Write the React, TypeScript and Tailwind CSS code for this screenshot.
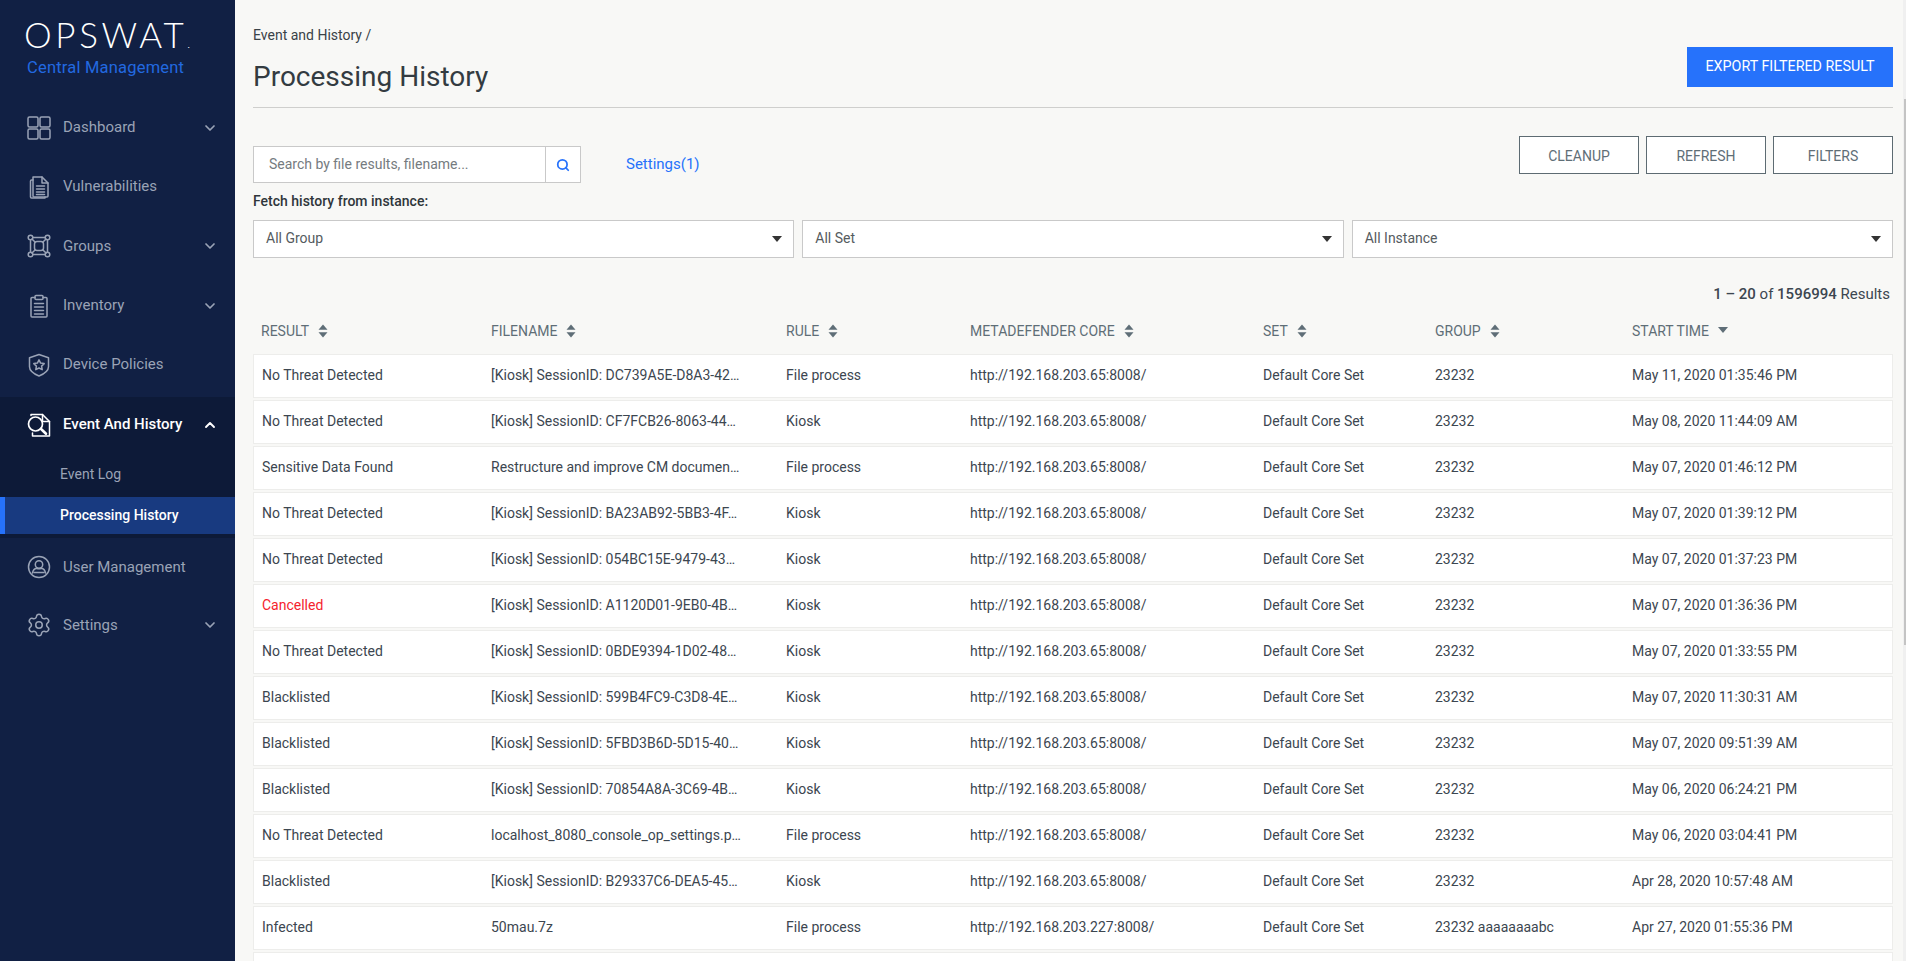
import React from "react";
import { ChevronDown, ChevronUp, Search, Settings } from "lucide-react";

const Ico = ({ children, white }: { children: React.ReactNode; white?: boolean }) => (
  <svg
    viewBox="0 0 24 24"
    fill="none"
    stroke="currentColor"
    strokeWidth={1.5}
    strokeLinecap="round"
    strokeLinejoin="round"
    className={"w-6 h-6 shrink-0 " + (white ? "text-white" : "text-[#9aa3b6]")}
  >
    {children}
  </svg>
);

const DashIcon = () => (
  <Ico>
    <rect x="1" y="1" width="10" height="10" rx="1.5" />
    <rect x="13" y="1" width="10" height="10" rx="1.5" />
    <rect x="1" y="13" width="10" height="10" rx="1.5" />
    <rect x="13" y="13" width="10" height="10" rx="1.5" />
  </Ico>
);
const VulnIcon = () => (
  <Ico>
    <path d="M6 2h9l6 6v13a1 1 0 0 1-1 1H7a1 1 0 0 1-1-1z" />
    <path d="M6 5H4.5a1 1 0 0 0-1 1v16a1 1 0 0 0 1 1H18v-1" />
    <path d="M15 2v6h6M9.5 11h8M9.5 14h8M9.5 17h8M9.5 19.5h8" />
  </Ico>
);
const GroupIcon = () => (
  <Ico>
    <circle cx="3.5" cy="3.5" r="2.3" />
    <circle cx="20.5" cy="3.5" r="2.3" />
    <circle cx="3.5" cy="20.5" r="2.3" />
    <circle cx="20.5" cy="20.5" r="2.3" />
    <rect x="7.5" y="7.5" width="9" height="9" rx="2.5" />
    <path d="M5.8 3.5h12.4M5.8 20.5h12.4M3.5 5.8v12.4M20.5 5.8v12.4M5 5l3 3M19 5l-3 3M5 19l3-3M19 19l-3-3" />
  </Ico>
);
const InvIcon = () => (
  <Ico>
    <path d="M8 3.5H5a1 1 0 0 0-1 1V22a1 1 0 0 0 1 1h14a1 1 0 0 0 1-1V4.5a1 1 0 0 0-1-1h-3" />
    <rect x="8" y="1.5" width="8" height="4" rx="1" />
    <path d="M7.5 9.5h9M7.5 13h9M7.5 16.5h9M7.5 20h9" />
  </Ico>
);
const ShieldIcon = () => (
  <Ico>
    <path d="M12 1.5l9.5 3.2v9c0 3.6-4 7-9.5 9.3-5.5-2.3-9.5-5.7-9.5-9.3v-9z" />
    <path d="M12 6.8l1.6 3.3 3.6.5-2.6 2.5.6 3.6-3.2-1.7-3.2 1.7.6-3.6-2.6-2.5 3.6-.5z" />
  </Ico>
);
const EventIcon = () => (
  <Ico white>
    <path d="M4 2.5V1.500h11.500l7 7V23H5.500v-3" strokeWidth={1.5} />
    <path d="M15.500 1.500v7h7" strokeWidth={1.5} />
    <circle cx="8.500" cy="11" r="7" strokeWidth={1.7} />
    <path d="M13.800 15.800l5.200 5" strokeWidth={2.6} />
  </Ico>
);
const UserIcon = () => (
  <Ico>
    <circle cx="12" cy="12" r="10.5" />
    <circle cx="12" cy="9.500" r="3.7" />
    <path d="M5.500 18c.5-2.800 2.500-4.500 4.200-4.700 1.500.7 3 .7 4.600 0 1.700.2 3.700 1.900 4.200 4.700" />
    <path d="M7 17.500h10" />
  </Ico>
);

const NavItem = ({
  label,
  icon,
  chevron,
  h = "h-[59px]",
}: {
  label: string;
  icon: React.ReactNode;
  chevron?: boolean;
  h?: string;
}) => (
  <div className={"flex items-center pl-[27px] pr-[17px] text-[#9aa3b6] " + h}>
    {icon}
    <span className="ml-[12px] text-[15px] flex-1">{label}</span>
    {chevron && <ChevronDown size={16} strokeWidth={2.6} />}
  </div>
);

const Sort = () => (
  <svg viewBox="0 0 10 14" className="w-[10px] h-[14px] ml-[9px] -mt-[1px] text-[#5f6e77]" fill="currentColor">
    <path d="M5 0.500L9.500 5.800H0.500z" />
    <path d="M5 13.500L9.500 8.200H0.500z" />
  </svg>
);

const Caret = () => (
  <svg viewBox="0 0 10 6" className="w-[10px] h-[6px] text-[#333]" fill="currentColor">
    <path d="M0 0h10L5 6z" />
  </svg>
);

const Select = ({ label }: { label: string }) => (
  <div className="flex-1 h-[38px] border border-[#c9c9c9] bg-white flex items-center justify-between pl-[12px] pr-[11px] pb-[1px] text-[14px] text-[#555b60]">
    <span>{label}</span>
    <Caret />
  </div>
);

const OutlineBtn = ({ label }: { label: string }) => (
  <button className="w-[120px] h-[38px] pt-[2px] border border-[#5d6b72] bg-white text-[14px] text-[#5f6e77]">
    {label}
  </button>
);

const COLS = "grid grid-cols-[230px_295px_184px_293px_172px_197px_1fr]";

const S = "Default Core Set";
const U65 = "http://192.168.203.65:8008/";
const rows = [
  ["No Threat Detected", "[Kiosk] SessionID: DC739A5E-D8A3-42…", "File process", U65, S, "23232", "May 11, 2020 01:35:46 PM"],
  ["No Threat Detected", "[Kiosk] SessionID: CF7FCB26-8063-44…", "Kiosk", U65, S, "23232", "May 08, 2020 11:44:09 AM"],
  ["Sensitive Data Found", "Restructure and improve CM documen…", "File process", U65, S, "23232", "May 07, 2020 01:46:12 PM"],
  ["No Threat Detected", "[Kiosk] SessionID: BA23AB92-5BB3-4F…", "Kiosk", U65, S, "23232", "May 07, 2020 01:39:12 PM"],
  ["No Threat Detected", "[Kiosk] SessionID: 054BC15E-9479-43…", "Kiosk", U65, S, "23232", "May 07, 2020 01:37:23 PM"],
  ["Cancelled", "[Kiosk] SessionID: A1120D01-9EB0-4B…", "Kiosk", U65, S, "23232", "May 07, 2020 01:36:36 PM"],
  ["No Threat Detected", "[Kiosk] SessionID: 0BDE9394-1D02-48…", "Kiosk", U65, S, "23232", "May 07, 2020 01:33:55 PM"],
  ["Blacklisted", "[Kiosk] SessionID: 599B4FC9-C3D8-4E…", "Kiosk", U65, S, "23232", "May 07, 2020 11:30:31 AM"],
  ["Blacklisted", "[Kiosk] SessionID: 5FBD3B6D-5D15-40…", "Kiosk", U65, S, "23232", "May 07, 2020 09:51:39 AM"],
  ["Blacklisted", "[Kiosk] SessionID: 70854A8A-3C69-4B…", "Kiosk", U65, S, "23232", "May 06, 2020 06:24:21 PM"],
  ["No Threat Detected", "localhost_8080_console_op_settings.p…", "File process", U65, S, "23232", "May 06, 2020 03:04:41 PM"],
  ["Blacklisted", "[Kiosk] SessionID: B29337C6-DEA5-45…", "Kiosk", U65, S, "23232", "Apr 28, 2020 10:57:48 AM"],
  ["Infected", "50mau.7z", "File process", "http://192.168.203.227:8008/", S, "23232 aaaaaaaabc", "Apr 27, 2020 01:55:36 PM"],
];
const headers = ["RESULT", "FILENAME", "RULE", "METADEFENDER CORE", "SET", "GROUP"];

export default function App() {
  return (
    <div className="flex h-screen w-full overflow-hidden bg-[#f8f8f6] [font-family:Roboto,sans-serif] text-[#3c4650]">
      <aside className="w-[235px] shrink-0 bg-[#112044] flex flex-col">
        <div className="h-[98px] pl-[24px] pt-[14px]">
          <div className="[font-family:Lato,sans-serif] font-light text-white text-[35px] leading-[40px] tracking-[3.6px] whitespace-nowrap">
            OPSWAT<span className="text-[12px] tracking-normal">.</span>
          </div>
          <div className="text-[#2269e0] text-[16.5px] leading-[22px] -mt-[7px] ml-[3px] whitespace-nowrap tracking-[0.2px]">
            Central Management
          </div>
        </div>
        <NavItem label="Dashboard" icon={<DashIcon />} chevron />
        <NavItem label="Vulnerabilities" icon={<VulnIcon />} />
        <NavItem label="Groups" icon={<GroupIcon />} chevron h="h-[60px]" />
        <NavItem label="Inventory" icon={<InvIcon />} chevron />
        <NavItem label="Device Policies" icon={<ShieldIcon />} />
        <div className="mt-[3px] bg-[#0d1a38] pb-[4px]">
          <div className="h-[55px] flex items-center pl-[27px] pr-[17px] text-white">
            <EventIcon />
            <span className="ml-[12px] text-[15px] font-medium flex-1">Event And History</span>
            <ChevronUp size={16} strokeWidth={2.8} />
          </div>
          <div className="h-[45px] flex items-center pl-[60px] text-[14px] text-[#9aa3b6]">Event Log</div>
          <div className="h-[37px] flex items-center pl-[55px] text-[14px] font-medium text-white bg-[#183a80] border-l-[5px] border-[#2672fb]">
            Processing History
          </div>
        </div>
        <NavItem label="User Management" icon={<UserIcon />} h="h-[58px]" />
        <div className="h-[58px] flex items-center pl-[26px] pr-[17px] text-[#9aa3b6]">
          <Settings size={26} strokeWidth={1.4} className="shrink-0" />
          <span className="ml-[11px] text-[15px] flex-1">Settings</span>
          <ChevronDown size={16} strokeWidth={2.6} />
        </div>
      </aside>

      <main className="flex-1 min-w-0 pl-[18px] pr-[10px]">
        <header className="h-[108px] border-b border-[#cfcfcd] flex justify-between items-start">
          <div className="pt-[25px]">
            <div className="text-[14px] leading-[20px] text-[#3a4248]">Event and History /</div>
            <h1 className="mt-[14px] text-[28px] leading-[36px] text-[#333b41]">Processing History</h1>
          </div>
          <button className="mt-[47px] w-[206px] h-[40px] pb-[1px] bg-[#2672fb] text-white text-[14.3px]">
            EXPORT FILTERED RESULT
          </button>
        </header>

        <div className="mt-[28px] h-[47px] flex justify-between items-start">
          <div className="mt-[10px] flex items-center">
            <div className="w-[328px] h-[37px] border border-[#c9c9c9] bg-white flex">
              <input
                className="flex-1 min-w-0 pl-[15px] text-[14px] outline-none placeholder:text-[#757b80]"
                placeholder="Search by file results, filename..."
              />
              <div className="w-[35px] border-l border-[#c9c9c9] flex items-center justify-center">
                <Search size={14} strokeWidth={3} className="text-[#2672fb]" />
              </div>
            </div>
            <span className="ml-[45px] text-[15px] text-[#2672fb]">Settings(1)</span>
          </div>
          <div className="flex gap-[7px]">
            <OutlineBtn label="CLEANUP" />
            <OutlineBtn label="REFRESH" />
            <OutlineBtn label="FILTERS" />
          </div>
        </div>

        <div className="mt-[8px] text-[14px] leading-[20px] font-medium text-[#2f363b]">
          Fetch history from instance:
        </div>
        <div className="mt-[9px] flex gap-[8px]">
          <Select label="All Group" />
          <Select label="All Set" />
          <Select label="All Instance" />
        </div>

        <div className="mt-[26px] pr-[3px] text-right text-[15px] leading-[20px] text-[#3c4650]">
          <b className="font-medium">1 – 20</b> of <b className="font-medium">1596994</b> Results
        </div>

        <div className={COLS + " h-[50px] pt-[4px] pl-[8px] items-center text-[14px] text-[#5f6e77]"}>
          {headers.map((h) => (
            <div key={h} className="flex items-center">
              {h}
              <Sort />
            </div>
          ))}
          <div className="flex items-center">
            START TIME
            <span className="ml-[9px] -mt-[2px]">
              <svg viewBox="0 0 10 6" className="w-[10px] h-[6px] text-[#5f6e77]" fill="currentColor">
                <path d="M0 0h10L5 6z" />
              </svg>
            </span>
          </div>
        </div>

        <div className="flex flex-col gap-[2px]">
          {rows.map((r, i) => (
            <div
              key={i}
              className={COLS + " h-[44px] pl-[7px] pb-[2px] items-center bg-white border border-[#ededeb] text-[14px] whitespace-nowrap"}
            >
              {r.map((c, j) => (
                <div
                  key={j}
                  className={
                    (j === 0 && c === "Cancelled" ? "text-[#f5222d] " : "") +
                    (j === 0 ? "pl-[1px]" : "") +
                    (j === 1 ? "pt-[1px]" : "")
                  }
                >
                  {c}
                </div>
              ))}
            </div>
          ))}
          <div className="h-[44px] bg-white border border-[#ededeb]" />
        </div>
      </main>

      <div className="w-[3px] shrink-0 bg-[#f0f0f0] pt-[99px]">
        <div className="h-[546px] bg-[#c4c4c4] ml-[1px]" />
      </div>
    </div>
  );
}
